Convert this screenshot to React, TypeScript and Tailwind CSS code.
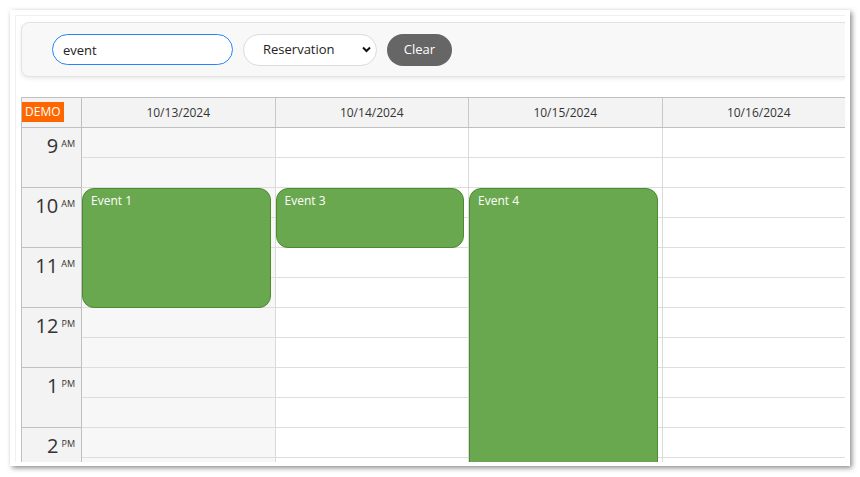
import React from "react"

const days = ["10/13/2024", "10/14/2024", "10/15/2024", "10/16/2024"]

const hours = [
  { h: "9", ap: "AM" },
  { h: "10", ap: "AM" },
  { h: "11", ap: "AM" },
  { h: "12", ap: "PM" },
  { h: "1", ap: "PM" },
  { h: "2", ap: "PM" },
]

interface CalEvent {
  day: number
  text: string
  top: number
  height: number
}

const events: CalEvent[] = [
  { day: 0, text: "Event 1", top: 60, height: 120 },
  { day: 1, text: "Event 3", top: 60, height: 60 },
  { day: 2, text: "Event 4", top: 60, height: 400 },
]

function Toolbar() {
  return (
    <div className="w-[850px] h-[55px] shrink-0 bg-[#f8f8f8] border border-[#e3e3e3] rounded-lg shadow-[0_2px_4px_rgba(0,0,0,0.08)] flex items-center pl-[30px] gap-[10px]">
      <input
        defaultValue="event"
        className="w-[181px] h-[31px] rounded-full border border-[#2684ff] bg-white px-[10px] text-[13px] text-[#222] outline-none"
      />
      <div className="relative">
        <select
          defaultValue="Reservation"
          className="appearance-none w-[134px] h-[32px] rounded-[16px] border border-[#dcdcdc] bg-white pl-[19px] text-[13px] text-[#222] outline-none"
        >
          <option>Reservation</option>
          <option>Meeting</option>
        </select>
        <svg
          className="absolute right-[6px] top-[12px] w-[9px] h-[7px] pointer-events-none"
          viewBox="0 0 9 7"
        >
          <polyline points="1,1.5 4.5,5 8,1.5" fill="none" stroke="#111" strokeWidth="2" />
        </svg>
      </div>
      <button className="w-[65px] h-[32px] rounded-full bg-[#666666] text-white text-[13px]">
        Clear
      </button>
    </div>
  )
}

function Calendar() {
  return (
    <div className="w-[835px] border-l border-t border-[#c0c0c0] shrink-0">
      {/* header */}
      <div className="flex h-[30px] border-b border-[#c0c0c0] bg-[#f3f3f3]">
        <div className="w-[60px] shrink-0 border-r border-[#c0c0c0]">
          <span className="inline-block bg-[#ff6600] text-white text-[12px] leading-[20px] px-[3px]">
            DEMO
          </span>
        </div>
        {days.map(d => (
          <div
            key={d}
            className="w-[193.5px] shrink-0 border-r border-[#c8c8c8] flex items-center justify-center pt-[1px] text-[12px] text-[#333]"
          >
            {d}
          </div>
        ))}
      </div>

      {/* body */}
      <div className="flex">
        <div className="w-[60px] shrink-0 border-r border-[#c0c0c0] bg-[#f3f3f3]">
          {hours.map(t => (
            <div
              key={t.h}
              className="h-[60px] border-b border-[#c0c0c0] flex justify-end items-start pr-[6px] pt-[8px] text-[#333]"
            >
              <span className="text-[20px] leading-none">{t.h}</span>
              <span className="text-[9px] leading-none mt-[3px] ml-[3px]">{t.ap}</span>
            </div>
          ))}
        </div>
        {days.map((d, i) => (
          <div
            key={d}
            className={`relative w-[193.5px] shrink-0 border-r border-[#dadada] ${i === 0 ? "bg-[#f7f7f7]" : "bg-white"}`}
          >
            {Array.from({ length: 12 }).map((_, k) => (
              <div key={k} className="h-[30px] border-b border-[#dddddd]" />
            ))}
            {events
              .filter(e => e.day === i)
              .map(e => (
                <div
                  key={e.text}
                  className="absolute left-0 right-[4px] rounded-[12px] bg-[#6aa84f] border border-[#4d8a30] text-white text-[12px] leading-[16px] pl-[8px] pt-[4px]"
                  style={{ top: e.top, height: e.height }}
                >
                  {e.text}
                </div>
              ))}
          </div>
        ))}
      </div>
    </div>
  )
}

export default function App() {
  return (
    <div className="w-[860px] h-[477px] bg-white overflow-hidden font-['Open_Sans',sans-serif]">
      <div className="ml-[10px] mt-[10px] w-[840px] h-[456px] bg-white shadow-[2px_2px_5px_rgba(0,0,0,0.45)] pt-[5px] pl-[5px]">
        <div className="w-[830px] h-[447px] overflow-hidden border-t border-l border-[#f0f0f0] pl-[5px] pt-[6px] flex flex-col">
          <Toolbar />
          <div className="h-[20px] shrink-0" />
          <Calendar />
        </div>
      </div>
    </div>
  )
}
